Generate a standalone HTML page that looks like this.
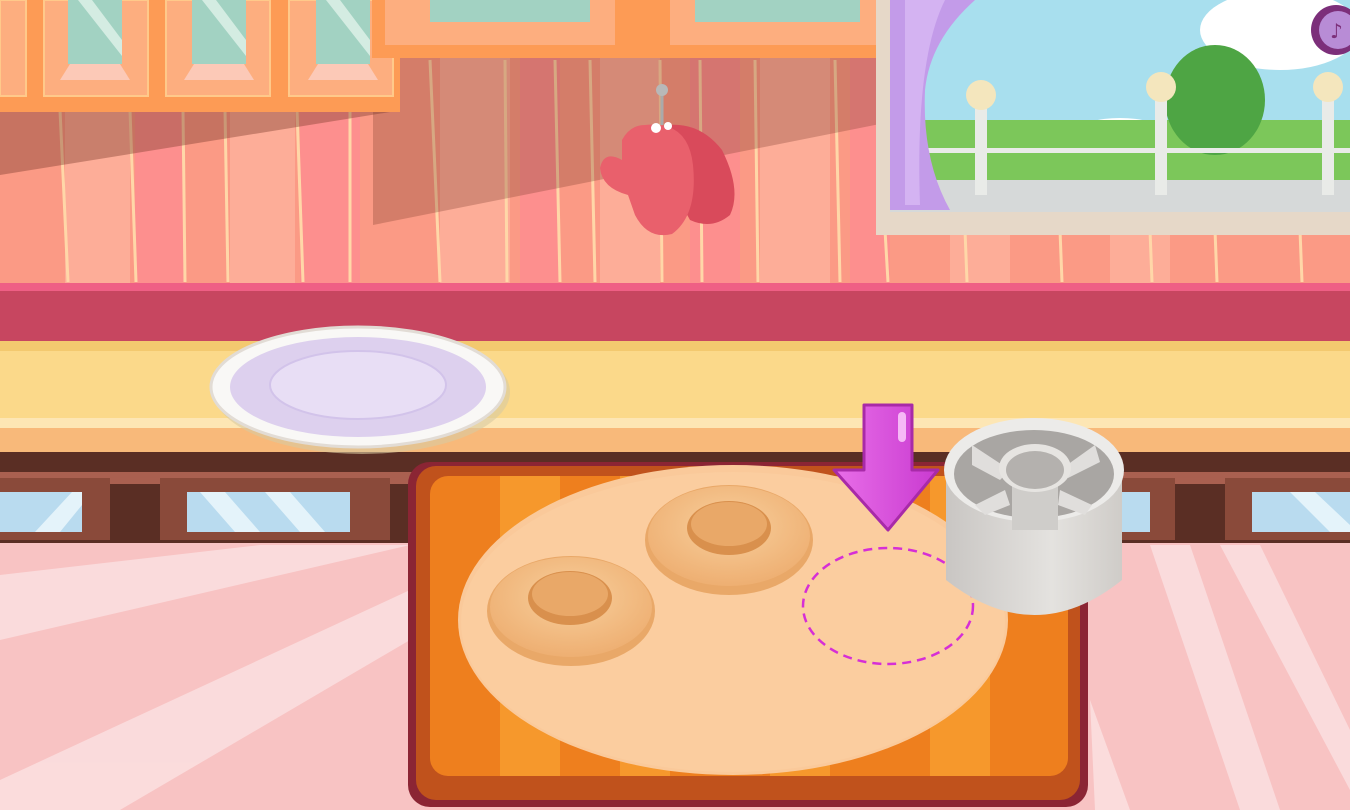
<!DOCTYPE html>
<html><head><meta charset="utf-8"><style>html,body{margin:0;padding:0;overflow:hidden;background:#f7c5c8}svg{display:block}</style></head><body>
<svg width="1350" height="810" viewBox="0 0 1350 810" xmlns="http://www.w3.org/2000/svg">
<defs>
<linearGradient id="cyl" x1="0" x2="1"><stop offset="0" stop-color="#c9c6c3"/><stop offset=".6" stop-color="#e4e2df"/><stop offset="1" stop-color="#cfccc8"/></linearGradient>
<linearGradient id="arr" x1="0" x2="1"><stop offset="0" stop-color="#e86ee8"/><stop offset="1" stop-color="#c93ad0"/></linearGradient>
<radialGradient id="dn" cx=".5" cy=".4" r=".6"><stop offset="0" stop-color="#f8cf9c"/><stop offset="1" stop-color="#eeaf72"/></radialGradient>
</defs>
<rect x="0" y="0" width="1350" height="285" fill="#fb9a85"/>
<g fill="#fdad98"><rect x="65" y="0" width="65" height="285"/><rect x="230" y="0" width="65" height="285"/><rect x="440" y="0" width="70" height="285"/><rect x="600" y="0" width="60" height="285"/><rect x="760" y="0" width="70" height="285"/><rect x="950" y="230" width="60" height="55"/><rect x="1110" y="230" width="60" height="55"/></g>
<g fill="#fd8f8e"><rect x="135" y="0" width="50" height="285"/><rect x="300" y="0" width="60" height="285"/><rect x="520" y="0" width="40" height="285"/><rect x="690" y="0" width="50" height="285"/><rect x="850" y="0" width="40" height="285"/></g>
<g stroke="#ffd7a8" stroke-width="3"><line x1="60" y1="110" x2="68" y2="282"/><line x1="130" y1="110" x2="136" y2="282"/><line x1="183" y1="110" x2="185" y2="282"/><line x1="225" y1="110" x2="228" y2="282"/><line x1="297" y1="110" x2="303" y2="282"/><line x1="350" y1="110" x2="350" y2="282"/><line x1="430" y1="60" x2="440" y2="282"/><line x1="505" y1="60" x2="507" y2="282"/><line x1="555" y1="60" x2="560" y2="282"/><line x1="590" y1="60" x2="595" y2="282"/><line x1="660" y1="60" x2="662" y2="282"/><line x1="700" y1="60" x2="702" y2="282"/><line x1="755" y1="60" x2="758" y2="282"/><line x1="835" y1="60" x2="840" y2="282"/><line x1="885" y1="230" x2="888" y2="282"/><line x1="965" y1="230" x2="967" y2="282"/><line x1="1060" y1="230" x2="1062" y2="282"/><line x1="1150" y1="230" x2="1152" y2="282"/><line x1="1215" y1="230" x2="1217" y2="282"/><line x1="1300" y1="230" x2="1302" y2="282"/></g>
<polygon points="0,112 390,112 0,175" fill="#7a3a2a" opacity=".4"/>
<polygon points="373,58 900,58 900,120 373,225" fill="#7a3a2a" opacity=".3"/>
<rect x="0" y="0" width="400" height="112" fill="#fd9b55"/>
<g fill="#fdae7f" stroke="#ffc98a" stroke-width="2">
<rect x="0" y="0" width="26" height="96"/><rect x="44" y="0" width="104" height="96"/><rect x="166" y="0" width="104" height="96"/><rect x="289" y="0" width="104" height="96"/></g>
<g fill="#a2d2c2"><rect x="68" y="0" width="54" height="64"/><rect x="192" y="0" width="54" height="64"/><rect x="316" y="0" width="54" height="64"/></g>
<g fill="#d4ece2"><polygon points="78,0 92,0 122,40 122,56"/><polygon points="202,0 216,0 246,40 246,56"/><polygon points="326,0 340,0 370,40 370,56"/></g>
<g fill="#fcc9b7"><polygon points="60,80 130,80 120,64 70,64"/><polygon points="184,80 254,80 244,64 194,64"/><polygon points="308,80 378,80 368,64 318,64"/></g>
<rect x="372" y="0" width="543" height="58" fill="#fd9b55"/>
<g fill="#fdae7f"><rect x="385" y="0" width="230" height="45"/><rect x="670" y="0" width="232" height="45"/></g>
<g fill="#a2d2c2"><rect x="430" y="0" width="160" height="22"/><rect x="695" y="0" width="165" height="22"/></g>
<rect x="876" y="0" width="474" height="235" fill="#e6d8c8"/>
<rect x="890" y="0" width="460" height="212" fill="#a8dfee"/>
<ellipse cx="1280" cy="30" rx="80" ry="40" fill="#fff"/>
<ellipse cx="1120" cy="130" rx="40" ry="12" fill="#fff"/>
<rect x="890" y="120" width="460" height="92" fill="#7cc75a"/>
<ellipse cx="1215" cy="100" rx="50" ry="55" fill="#4ea544"/>
<rect x="890" y="180" width="460" height="32" fill="#d6d9d9"/>
<g fill="#e9ebe8"><rect x="975" y="105" width="12" height="90"/><rect x="1155" y="95" width="12" height="100"/><rect x="1322" y="95" width="12" height="100"/></g>
<rect x="890" y="148" width="460" height="5" fill="#e9ebe8"/>
<g fill="#f4e6bd"><circle cx="981" cy="95" r="15"/><circle cx="1161" cy="87" r="15"/><circle cx="1328" cy="87" r="15"/></g>
<path d="M890 0 L975 0 Q930 40 925 90 Q922 160 950 210 L890 210Z" fill="#c39be9"/>
<path d="M905 0 L945 0 Q915 60 920 205 L905 205Z" fill="#d4b3f2"/>
<circle cx="1336" cy="30" r="25" fill="#7c2f7a"/><circle cx="1338" cy="30" r="19" fill="#b88cd6"/>
<text x="1330" y="38" font-family="DejaVu Sans" font-size="20" fill="#7c2f7a">♪</text>
<line x1="662" y1="90" x2="662" y2="125" stroke="#aaa" stroke-width="3"/><circle cx="662" cy="90" r="6" fill="#b8b8b8"/>
<path d="M668 125 Q700 122 722 150 Q742 190 730 215 Q712 230 690 220 L668 180Z" fill="#d94a5b"/>
<path d="M645 125 Q688 120 693 165 Q698 215 672 234 Q648 240 635 215 L628 195 Q602 188 600 168 Q604 150 622 160 L622 140 Q630 125 645 125Z" fill="#e9606c"/>
<circle cx="656" cy="128" r="5" fill="#fff"/><circle cx="668" cy="126" r="4" fill="#fff"/>
<rect x="0" y="283" width="1350" height="8" fill="#ef5f85"/>
<rect x="0" y="291" width="1350" height="50" fill="#c74660"/>
<rect x="0" y="341" width="1350" height="88" fill="#fbd98a"/>
<rect x="0" y="341" width="1350" height="10" fill="#f3c96f"/>
<rect x="0" y="418" width="1350" height="10" fill="#fde6b4"/>
<rect x="0" y="428" width="1350" height="24" fill="#f8b97a"/>
<rect x="0" y="452" width="1350" height="94" fill="#5a2e24"/>
<rect x="0" y="472" width="1350" height="12" fill="#a96050"/>
<g fill="#8a4a3a"><rect x="0" y="478" width="110" height="62"/><rect x="160" y="478" width="230" height="62"/><rect x="1120" y="478" width="55" height="62"/><rect x="1225" y="478" width="125" height="62"/></g>
<g fill="#b9dbef"><rect x="0" y="492" width="82" height="40"/><rect x="187" y="492" width="163" height="40"/><rect x="1120" y="492" width="30" height="40"/><rect x="1252" y="492" width="98" height="40"/></g>
<g fill="#e4f3fa"><polygon points="35,532 60,532 82,505 82,492 72,492"/><polygon points="200,492 225,492 260,532 235,532"/><polygon points="265,492 290,492 325,532 300,532"/><polygon points="1290,492 1315,492 1350,525 1350,532 1330,532"/></g>
<rect x="0" y="543" width="1350" height="267" fill="#f8c3c3"/>
<g fill="#fbe0e1" opacity=".85"><polygon points="0,575 260,545 410,545 0,640"/><polygon points="0,780 410,590 410,640 120,810 0,810"/><polygon points="1150,545 1190,545 1280,810 1240,810"/><polygon points="1220,545 1260,545 1350,730 1350,790"/><polygon points="1090,700 1130,810 1095,810"/></g>
<ellipse cx="362" cy="392" rx="148" ry="62" fill="#d8c9a0" opacity=".6"/>
<ellipse cx="358" cy="387" rx="147" ry="60" fill="#f9f8f6" stroke="#e2dcd5" stroke-width="3"/>
<ellipse cx="358" cy="387" rx="128" ry="50" fill="#ddd0ee"/>
<ellipse cx="358" cy="385" rx="88" ry="34" fill="#e8def5" stroke="#d2c3ea" stroke-width="2"/>
<rect x="408" y="462" width="680" height="345" rx="22" fill="#8b2534"/>
<rect x="416" y="466" width="664" height="334" rx="20" fill="#c0521c"/>
<rect x="430" y="476" width="638" height="300" rx="18" fill="#ee7f1e"/>
<g fill="#f6982c"><rect x="500" y="476" width="60" height="300"/><rect x="620" y="476" width="50" height="300"/><rect x="770" y="476" width="60" height="300"/><rect x="930" y="476" width="60" height="300"/></g>
<ellipse cx="733" cy="620" rx="275" ry="155" fill="#fac99a"/>
<ellipse cx="733" cy="622" rx="272" ry="150" fill="#fbcd9f"/>
<ellipse cx="571" cy="611" rx="84" ry="55" fill="#e9a868"/>
<ellipse cx="571" cy="607" rx="81" ry="50" fill="url(#dn)"/>
<ellipse cx="570" cy="598" rx="42" ry="27" fill="#d9904d"/>
<ellipse cx="570" cy="594" rx="38" ry="22" fill="#e9a868"/>
<ellipse cx="729" cy="540" rx="84" ry="55" fill="#e9a868"/>
<ellipse cx="729" cy="536" rx="81" ry="50" fill="url(#dn)"/>
<ellipse cx="729" cy="528" rx="42" ry="27" fill="#d9904d"/>
<ellipse cx="729" cy="524" rx="38" ry="22" fill="#e9a868"/>
<ellipse cx="888" cy="606" rx="85" ry="58" fill="none" stroke="#d62ed6" stroke-width="2.5" stroke-dasharray="9 6"/>
<path d="M864 405 L912 405 L912 470 L938 470 L888 530 L834 470 L864 470Z" fill="url(#arr)" stroke="#a82aa8" stroke-width="3" stroke-linejoin="round"/>
<rect x="898" y="412" width="8" height="30" rx="4" fill="#f6b8f6"/>
<path d="M946 470 L946 580 Q1035 650 1122 580 L1122 470Z" fill="url(#cyl)"/>
<ellipse cx="1034" cy="470" rx="90" ry="52" fill="#ecebe9"/>
<ellipse cx="1034" cy="474" rx="80" ry="44" fill="#a9a6a3"/>
<polygon points="972,445 1010,470 1000,480 972,465" fill="#e0dedc"/>
<polygon points="1095,445 1060,470 1068,478 1100,462" fill="#e0dedc"/>
<polygon points="975,505 1005,490 1010,505 985,515" fill="#e0dedc"/>
<polygon points="1092,505 1060,490 1058,505 1085,515" fill="#e0dedc"/>
<rect x="1012" y="468" width="46" height="62" fill="#cfcdca"/>
<ellipse cx="1035" cy="468" rx="36" ry="24" fill="#e6e4e1"/>
<ellipse cx="1035" cy="470" rx="29" ry="19" fill="#b4b1ae"/>
</svg>
</body></html>
